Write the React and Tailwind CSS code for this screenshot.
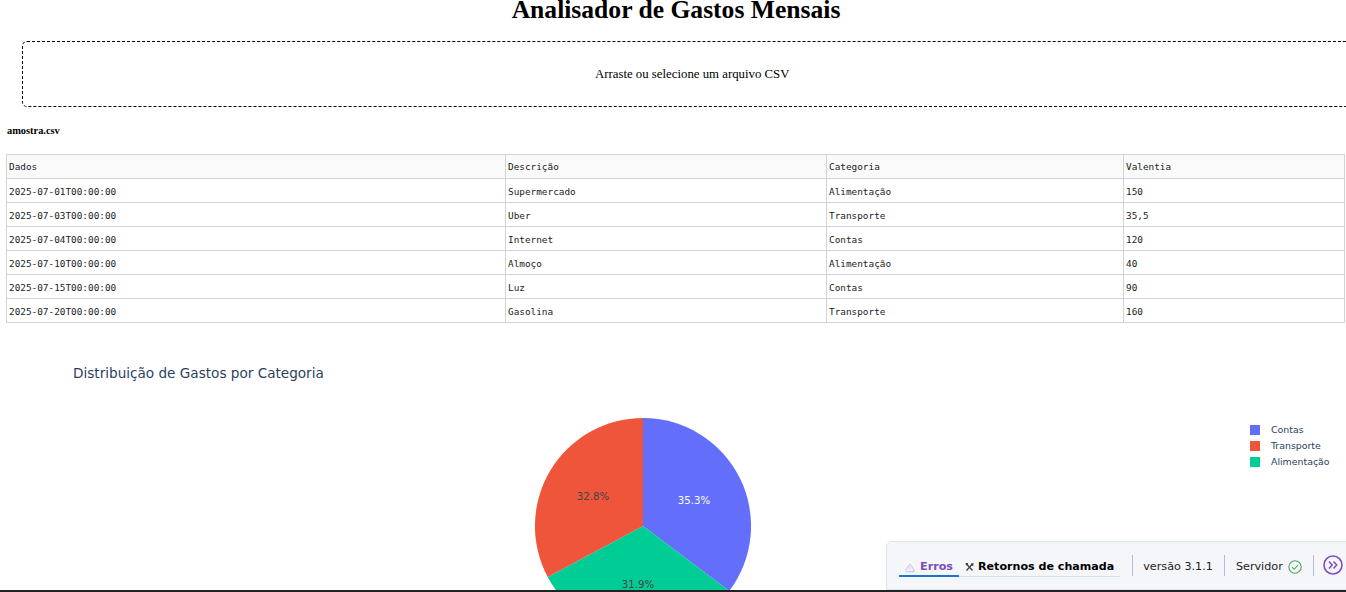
import React from 'react';
import { TriangleAlert } from 'lucide-react';

const columns = ['Dados', 'Descrição', 'Categoria', 'Valentia'];
const rows = [
  ['2025-07-01T00:00:00', 'Supermercado', 'Alimentação', '150'],
  ['2025-07-03T00:00:00', 'Uber', 'Transporte', '35,5'],
  ['2025-07-04T00:00:00', 'Internet', 'Contas', '120'],
  ['2025-07-10T00:00:00', 'Almoço', 'Alimentação', '40'],
  ['2025-07-15T00:00:00', 'Luz', 'Contas', '90'],
  ['2025-07-20T00:00:00', 'Gasolina', 'Transporte', '160'],
];
const legend = [
  { label: 'Contas', color: 'bg-[#636efa]' },
  { label: 'Transporte', color: 'bg-[#ef553b]' },
  { label: 'Alimentação', color: 'bg-[#00cc96]' },
];

function PieChart() {
  return (
    <svg width="216" height="216" viewBox="0 0 216 216" className="block shrink-0">
      <path d="M108 108 L108 0 A108 108 0 0 1 194.2 173.1 Z" fill="#636efa" />
      <path d="M108 108 L194.2 173.1 A108 108 0 0 1 12.7 158.9 Z" fill="#00cc96" />
      <path d="M108 108 L12.7 158.9 A108 108 0 0 1 108 0 Z" fill="#ef553b" />
      <text x="159" y="86" textAnchor="middle" fontSize="10.2" fontFamily="DejaVu Sans, sans-serif" fill="#ffffff">35.3%</text>
      <text x="58" y="82" textAnchor="middle" fontSize="10.2" fontFamily="DejaVu Sans, sans-serif" fill="#444444">32.8%</text>
      <text x="103" y="170" textAnchor="middle" fontSize="10.2" fontFamily="DejaVu Sans, sans-serif" fill="#444444">31.9%</text>
    </svg>
  );
}

// wrench and screwdriver, crossed
function ToolIcon() {
  return (
    <svg width="9" height="10" viewBox="0 0 9 10" className="shrink-0 text-[#444]">
      <path d="M1.5 2 L7.5 8.5 M7 2.5 L1.5 8.5" stroke="currentColor" strokeWidth="1.3" fill="none" />
      <path d="M0.5 1 L3 1 L3 3 L1 3.4 Z" fill="currentColor" />
      <path d="M5.8 1.6 L8.6 1 L8.2 4 L6.4 3.8 Z" fill="currentColor" />
    </svg>
  );
}

function DevTools() {
  return (
    <div className="absolute left-[886px] top-[541px] w-[480px] h-[49px] bg-[#f5f6fa] border border-[#dfe3ec] rounded-tl-[6px] flex items-start pl-[12px] pt-[13px] font-['DejaVu_Sans',sans-serif] text-[11.2px] text-[#222]">
      <div className="flex h-[22px] items-center border-b border-[#d5dcec]">
        <div className="flex items-center gap-[5px] px-[6px] pt-[5px] h-[22px] border-b-2 border-[#1976c8] -mb-px text-[#7a4fbf] font-bold">
          <TriangleAlert size={10} strokeWidth={1.2} className="text-[#a58bd0]" />
          <span>Erros</span>
        </div>
        <div className="flex items-center gap-[4px] pl-[6px] pr-[6px] pt-[3px] text-[11.1px] font-bold text-black">
          <ToolIcon />
          <span>Retornos de chamada</span>
        </div>
      </div>
      <div className="w-px h-[21px] bg-[#b4bbd2] ml-[12px]" />
      <div className="pl-[10px] pr-[11px] pt-[3px] h-[21px] flex items-center">versão 3.1.1</div>
      <div className="w-px h-[21px] bg-[#b4bbd2]" />
      <div className="px-[11px] pt-[3px] h-[21px] flex items-center gap-[5px]">
        Servidor
        <svg width="14" height="14" viewBox="0 0 14 14" className="shrink-0">
          <circle cx="7" cy="7" r="6.2" fill="none" stroke="#4ea35a" strokeWidth="1.1" />
          <path d="M4 7.2 L6.2 9.3 L10 5" fill="none" stroke="#4ea35a" strokeWidth="1.1" />
        </svg>
      </div>
      <div className="w-px h-[21px] bg-[#b4bbd2]" />
      <svg width="20" height="20" viewBox="0 0 20 20" className="ml-[9px] shrink-0">
        <circle cx="10" cy="10" r="9" fill="#f5f6fa" stroke="#7f4bc4" strokeWidth="1.6" />
        <path d="M6 6.5 L9.2 10 L6 13.5 M10.5 6.5 L13.7 10 L10.5 13.5" fill="none" stroke="#7f4bc4" strokeWidth="1.5" />
      </svg>
    </div>
  );
}

export default function App() {
  return (
    <div className="relative w-[1346px] h-[592px] overflow-hidden bg-white font-['Liberation_Serif',serif] text-black">
      <h1 className="text-center text-[25.6px] leading-[30px] font-bold -mt-[5px] ml-[6px]">Analisador de Gastos Mensais</h1>
      <div className="ml-[22px] mt-[16px] w-[1400px] h-[66px] border border-dashed border-black rounded-[5px] flex items-center pl-[572px] pt-[1px] text-[12.8px]">
        Arraste ou selecione um arquivo CSV
      </div>
      <div className="ml-[7px] mt-[18px] text-[10.4px] leading-[12px] font-bold">amostra.csv</div>
      <table className="ml-[6px] mt-[17px] w-[1338px] table-fixed border-collapse font-['DejaVu_Sans_Mono',monospace] text-[9.4px] text-[#222]">
        <colgroup>
          <col className="w-[499px]" />
          <col className="w-[321px]" />
          <col className="w-[297px]" />
          <col className="w-[221px]" />
        </colgroup>
        <thead>
          <tr className="h-[24px] bg-[#fafafa]">
            {columns.map((c) => (
              <th key={c} className="border border-[#d3d3d3] pl-[2px] pr-[2px] pt-[2px] text-left font-normal">{c}</th>
            ))}
          </tr>
        </thead>
        <tbody>
          {rows.map((row) => (
            <tr key={row[0]} className="h-[24px]">
              {row.map((cell, i) => (
                <td key={i} className="border border-[#d3d3d3] pl-[2px] pr-[2px] pt-[4px]">{cell}</td>
              ))}
            </tr>
          ))}
        </tbody>
      </table>
      <div className="flex mt-[41px]">
        <div className="pl-[73px] w-[535px] shrink-0 font-['DejaVu_Sans',sans-serif] text-[13.6px] leading-[18px] text-[#2a3f5f]">Distribuição de Gastos por Categoria</div>
        <div className="pt-[54px] w-[715px] shrink-0"><PieChart /></div>
        <div className="pt-[59px] flex flex-col gap-[3px] font-['DejaVu_Sans',sans-serif] text-[9.4px] text-[#2a3f5f]">
          {legend.map((l) => (
            <div key={l.label} className="flex items-center gap-[11px] h-[13px]">
              <span className={`w-[10px] h-[10px] ${l.color}`} />
              <span className="mt-[2px]">{l.label}</span>
            </div>
          ))}
        </div>
      </div>
      <DevTools />
      <div className="absolute left-0 right-0 bottom-0 h-[2px] bg-[#222]" />
    </div>
  );
}
